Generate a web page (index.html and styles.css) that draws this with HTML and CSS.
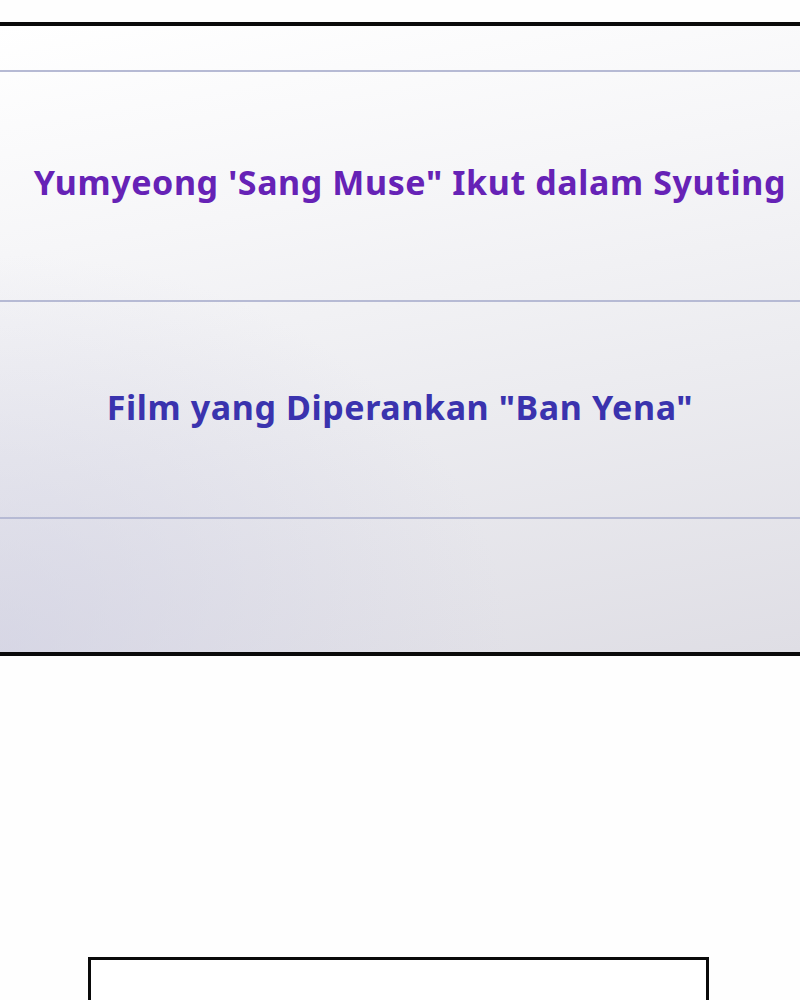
FILE: index.html
```html
<!DOCTYPE html>
<html lang="id">
<head>
  <meta charset="UTF-8">
  <meta name="viewport" content="width=device-width, initial-scale=1">
  <title>Yumyeong - Panel</title>
  <link rel="stylesheet" href="styles.css">
</head>
<body>

  <!-- Title card panel -->
  <div class="panel">
    <div class="strip top"></div>
    <div class="strip caption">
      <p class="title">Yumyeong 'Sang Muse" Ikut dalam Syuting</p>
    </div>
    <div class="strip caption second">
      <p class="subtitle">Film yang Diperankan "Ban Yena"</p>
    </div>
    <div class="strip bottom"></div>
  </div>

  <!-- Next panel (cut off) -->
  <div class="next-panel"></div>

</body>
</html>
```

FILE: styles.css
```css
body {
  margin: 0;
  padding: 0;
  background: #fefefe;
  font-family: "Noto Sans", "Open Sans", sans-serif;
  overflow: hidden;
}

.panel {
  margin-top: 22px;
  margin-left: -2px;
  border-top: 4px solid #0a0a0a;
  border-bottom: 4px solid #0a0a0a;
  border-left: 2px solid #e4e4ea;
  height: 626px;
  display: flex;
  flex-direction: column;
  background:
    radial-gradient(ellipse at 0% 100%, rgba(205, 205, 225, 0.6), rgba(205, 205, 225, 0) 45%),
    linear-gradient(170deg, #ffffff 0%, #f6f6f8 30%, #ececf0 60%, #dfdee5 100%);
}

.strip {
  border-bottom: 2px solid #b6bad4;
  display: flex;
  align-items: center;
  justify-content: center;
  flex-shrink: 0;
}

.strip.top {
  height: 44px;
}

.strip.caption {
  height: 228px;
}

.strip.caption.second {
  height: 215px;
}

.strip.bottom {
  flex: 1;
  border-bottom: none;
}

.title,
.subtitle {
  margin: 0;
  font-size: 34px;
  font-weight: 700;
  letter-spacing: 0.6px;
  white-space: nowrap;
}

.title {
  color: #6622b6;
  margin-top: -8px;
  margin-left: 20px;
}

.subtitle {
  color: #3a33ae;
  margin-top: -6px;
}

.next-panel {
  margin-top: 301px;
  margin-left: 88px;
  width: 615px;
  height: 60px;
  border: 3px solid #0a0a0a;
  border-bottom: none;
  background: #fff;
}
```
